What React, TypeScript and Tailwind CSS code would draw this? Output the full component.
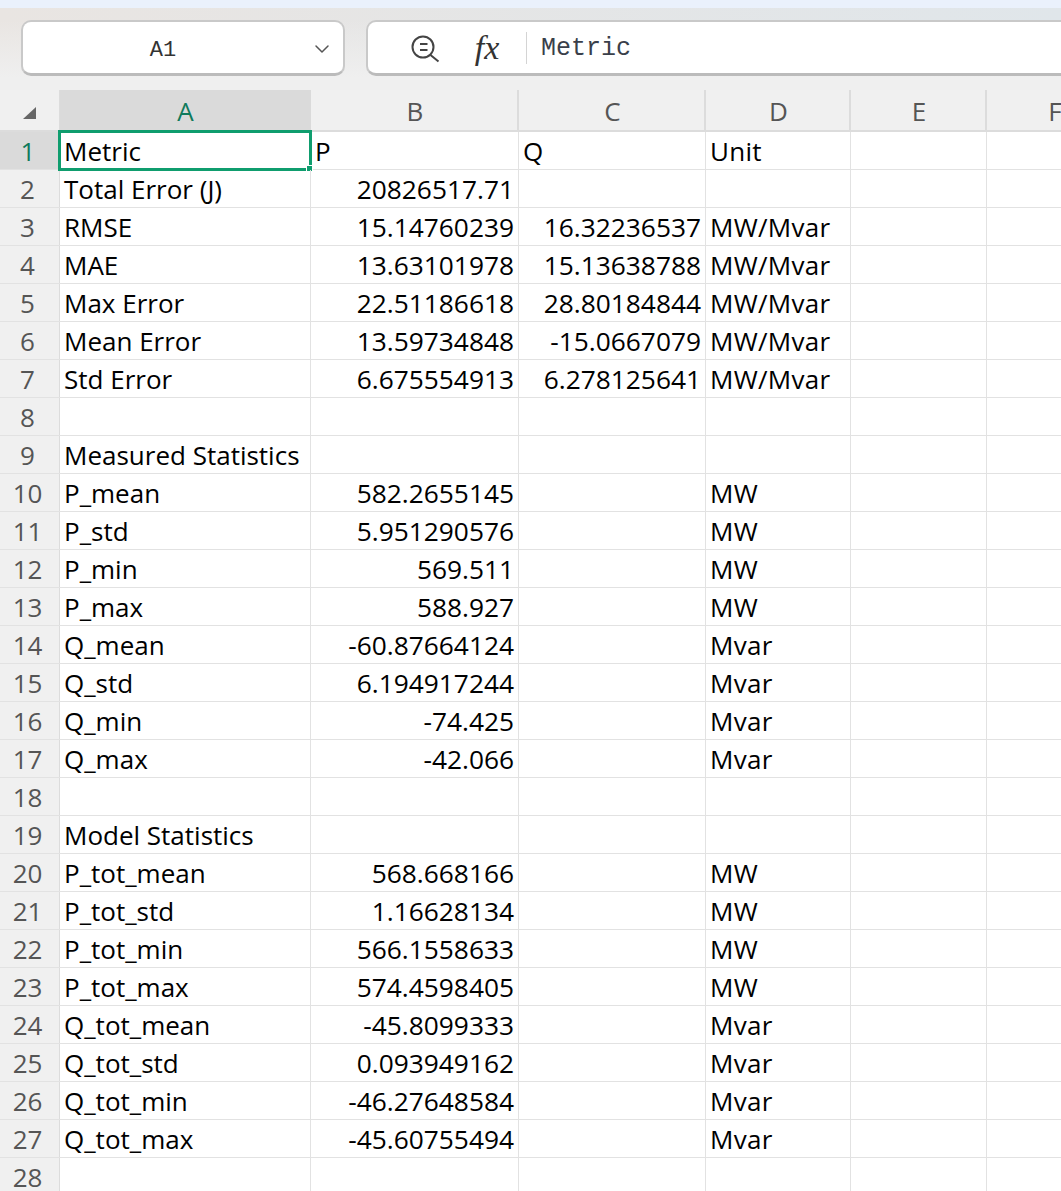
import React from 'react';
import { ChevronDown } from 'lucide-react';

const COLUMNS = ['A', 'B', 'C', 'D', 'E', 'F'];

// label, P, Q, unit
const ROWS: string[][] = [
  ['Metric', 'P', 'Q', 'Unit'],
  ['Total Error (J)', '20826517.71', '', ''],
  ['RMSE', '15.14760239', '16.32236537', 'MW/Mvar'],
  ['MAE', '13.63101978', '15.13638788', 'MW/Mvar'],
  ['Max Error', '22.51186618', '28.80184844', 'MW/Mvar'],
  ['Mean Error', '13.59734848', '-15.0667079', 'MW/Mvar'],
  ['Std Error', '6.675554913', '6.278125641', 'MW/Mvar'],
  ['', '', '', ''],
  ['Measured Statistics', '', '', ''],
  ['P_mean', '582.2655145', '', 'MW'],
  ['P_std', '5.951290576', '', 'MW'],
  ['P_min', '569.511', '', 'MW'],
  ['P_max', '588.927', '', 'MW'],
  ['Q_mean', '-60.87664124', '', 'Mvar'],
  ['Q_std', '6.194917244', '', 'Mvar'],
  ['Q_min', '-74.425', '', 'Mvar'],
  ['Q_max', '-42.066', '', 'Mvar'],
  ['', '', '', ''],
  ['Model Statistics', '', '', ''],
  ['P_tot_mean', '568.668166', '', 'MW'],
  ['P_tot_std', '1.16628134', '', 'MW'],
  ['P_tot_min', '566.1558633', '', 'MW'],
  ['P_tot_max', '574.4598405', '', 'MW'],
  ['Q_tot_mean', '-45.8099333', '', 'Mvar'],
  ['Q_tot_std', '0.093949162', '', 'Mvar'],
  ['Q_tot_min', '-46.27648584', '', 'Mvar'],
  ['Q_tot_max', '-45.60755494', '', 'Mvar'],
  ['', '', '', ''],
];

const GRID = 'grid grid-cols-[60px_251px_208px_187px_145px_136px_136px] w-[1123px]';
const CELL = 'h-full border-r border-[#e2e2e2] flex items-center whitespace-nowrap';

// P and Q hold numbers (right aligned) except in the header row
const valueAlign = (row: number) =>
  row === 0 ? 'justify-start pl-[4px]' : 'justify-end pr-[4px] text-[26.3px]';

const ZoomIcon = () => (
  <svg width="32" height="32" viewBox="0 0 32 32" fill="none" stroke="#444" strokeWidth="2">
    <circle cx="13" cy="15" r="10.5" />
    <path d="M10 12h7.5M10 18h7.5M20.5 23l8 6.5" />
  </svg>
);

const App: React.FC = () => {
  return (
    <div className="h-[1191px] w-full overflow-hidden bg-white font-['Open_Sans','Noto_Sans',sans-serif] text-[26px] leading-[26px] text-black">
      <div className="h-2 bg-[#eaf1fc]" />

      {/* Name box and formula bar */}
      <div className="h-[82px] flex gap-[21px] pl-[21px] pt-[12px] bg-[linear-gradient(to_bottom,transparent_15%,#efefef_85%),linear-gradient(to_right,#e9e5e2,#e0e6ea)]">
        <div className="relative w-[324px] h-[56px] shrink-0 rounded-[10px] bg-white border-2 border-b-[3px] border-[#c9c9c9] border-b-[#bbbbbb] flex items-center justify-center font-['Liberation_Mono',monospace] text-[22px] text-[#333]">
          <span className="pr-[40px] pt-[6px]">A1</span>
          <ChevronDown className="absolute right-[9px] top-[15px] text-[#555]" size={24} strokeWidth={1.5} />
        </div>
        <div className="flex-1 h-[56px] rounded-l-[10px] bg-white border-2 border-r-0 border-b-[3px] border-[#c9c9c9] border-b-[#bbbbbb] flex items-center">
          <span className="ml-[42px] flex"><ZoomIcon /></span>
          <span className="ml-[25px] w-[40px] text-center font-['Liberation_Serif',serif] italic text-[34px] leading-none text-[#333]">fx</span>
          <span className="ml-[19px] h-[32px] border-l border-[#d4d4d4]" />
          <span className="ml-[14px] pt-[2px] font-['Liberation_Mono',monospace] text-[25px] leading-none text-[#3a3f4a]">Metric</span>
        </div>
      </div>

      {/* Column headers */}
      <div className={`${GRID} h-[42px] bg-[#f0f0f0] border-b-2 border-[#dcdcdc] text-[#555]`}>
        <div className="relative border-r border-[#dcdcdc]">
          <span className="absolute left-[23px] top-[17px] w-0 h-0 border-l-[13px] border-l-transparent border-b-[12px] border-b-[#666]" />
        </div>
        {COLUMNS.map((col, i) => (
          <div
            key={col}
            className={
              i === 0
                ? 'pt-[1px] flex items-center justify-center bg-[#dadada] text-[#0f7a5c]'
                : 'pt-[1px] pl-[2px] flex items-center justify-center border-r-2 border-[#dcdcdc]'
            }
          >
            {col}
          </div>
        ))}
      </div>

      {/* Sheet rows */}
      {ROWS.map((row, r) => (
        <div key={r} className={`${GRID} h-[38px] border-b border-[#e2e2e2]`}>
          <div
            className={
              r === 0
                ? 'pr-[4px] flex items-center justify-center bg-[#dadada] text-[#0f7a5c]'
                : 'pr-[4px] flex items-center justify-center bg-[#f0f0f0] text-[#555] border-r border-[#dcdcdc]'
            }
          >
            {r + 1}
          </div>
          <div className={`${CELL} pl-[4px] relative`}>
            {row[0]}
            {r === 0 && (
              <>
                <span className="absolute left-[-2px] top-[-2px] w-[254px] h-[41px] border-[3px] border-[#0f9d6e]" />
                <span className="absolute right-[-3px] bottom-[-3px] w-[5px] h-[5px] bg-[#0f9d6e] border border-white box-content" />
              </>
            )}
          </div>
          <div className={`${CELL} ${valueAlign(r)}`}>{row[1]}</div>
          <div className={`${CELL} ${valueAlign(r)}`}>{row[2]}</div>
          <div className={`${CELL} pl-[4px] tracking-[0.3px]`}>{row[3]}</div>
          <div className={CELL} />
          <div className={CELL} />
        </div>
      ))}
    </div>
  );
};

export default App;
